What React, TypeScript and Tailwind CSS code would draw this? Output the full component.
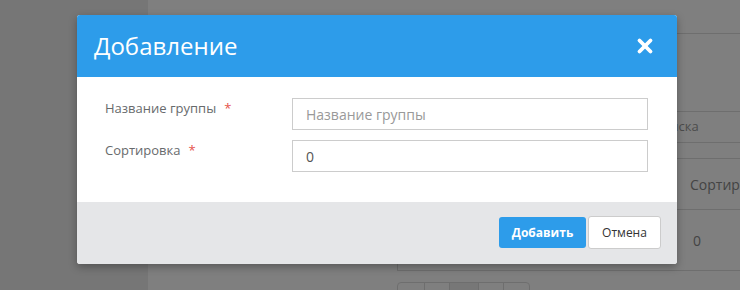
import { X } from 'lucide-react'

function BackgroundPage() {
  return (
    <div className="flex h-[290px] w-[740px]">
      <div className="w-[148px] shrink-0 bg-[#ececec]" />
      <div className="flex-1 bg-white">
        <div className="h-[34px] border-b border-[#dddddd]" />
        <div className="pl-[249px] pt-[77px]">
          <div className="flex h-[32px] items-center border-y border-[#dddddd] pl-[210px] text-[13px] text-[#999999]">
            Строка поиска
          </div>
          <div className="mt-[15px] border border-[#dddddd]">
            <div className="flex h-[51px] items-center border-b border-[#dddddd] pl-[292px] text-[14px] text-[#888888]">
              Сортировка
            </div>
            <div className="flex h-[60px] items-center pl-[295px] text-[14px] text-[#888888]">
              0
            </div>
          </div>
          <div className="mt-[11px] flex h-[30px] w-[133px] rounded-[4px] border border-[#dddddd]">
            <div className="w-[27px] border-r border-[#dddddd]" />
            <div className="w-[25px] border-r border-[#dddddd]" />
            <div className="w-[29px] border-r border-[#dddddd] bg-[#eeeeee]" />
            <div className="w-[25px] border-r border-[#dddddd]" />
            <div className="flex-1" />
          </div>
        </div>
      </div>
    </div>
  )
}

function Field({ label, children }: { label: string; children: React.ReactNode }) {
  return (
    <div className="flex">
      <div className="w-[215px] pl-[28px] pt-[1px] text-[13px] text-[#676a6c]">
        {label}
        <span className="ml-[8px] text-[#e5534b]">*</span>
      </div>
      <div className="w-[356px]">{children}</div>
    </div>
  )
}

export default function App() {
  return (
    <div
      className="relative h-[290px] w-[740px] overflow-hidden"
      style={{ fontFamily: '"Open Sans", "Noto Sans", sans-serif' }}
    >
      <BackgroundPage />
      <div className="absolute inset-0 bg-black/50 pl-[77px] pt-[15px]">
        <div className="w-[600px] rounded-[3px] bg-white shadow-[0_3px_9px_rgba(0,0,0,0.3)]">
          <div className="flex h-[62px] items-center justify-between rounded-t-[3px] bg-[#2d9cea] pl-[17px] pr-[21px]">
            <h2 className="text-[24px] leading-none text-white">Добавление</h2>
            <X size={22} strokeWidth={4.2} className="text-white" />
          </div>
          <div className="flex flex-col gap-[10px] pb-[30px] pt-[21px]">
            <Field label="Название группы">
              <input
                className="h-[32px] w-full border border-[#cccccc] px-[13px] text-[14px] text-[#555555] outline-none placeholder:text-[#999999]"
                placeholder="Название группы"
              />
            </Field>
            <Field label="Сортировка">
              <input
                className="h-[32px] w-full border border-[#cccccc] px-[13px] text-[14px] text-[#555555] outline-none"
                defaultValue="0"
              />
            </Field>
          </div>
          <div className="flex h-[62px] items-start justify-end gap-[2px] rounded-b-[3px] bg-[#e5e6e8] pr-[16px] pt-[15px]">
            <button className="h-[31px] w-[87px] rounded-[3px] bg-[#2d9cea] text-[12px] font-bold text-white">
              Добавить
            </button>
            <button className="-mt-px h-[33px] w-[73px] rounded-[3px] border border-[#cccccc] bg-white text-[12px] text-[#333333]">
              Отмена
            </button>
          </div>
        </div>
      </div>
    </div>
  )
}
